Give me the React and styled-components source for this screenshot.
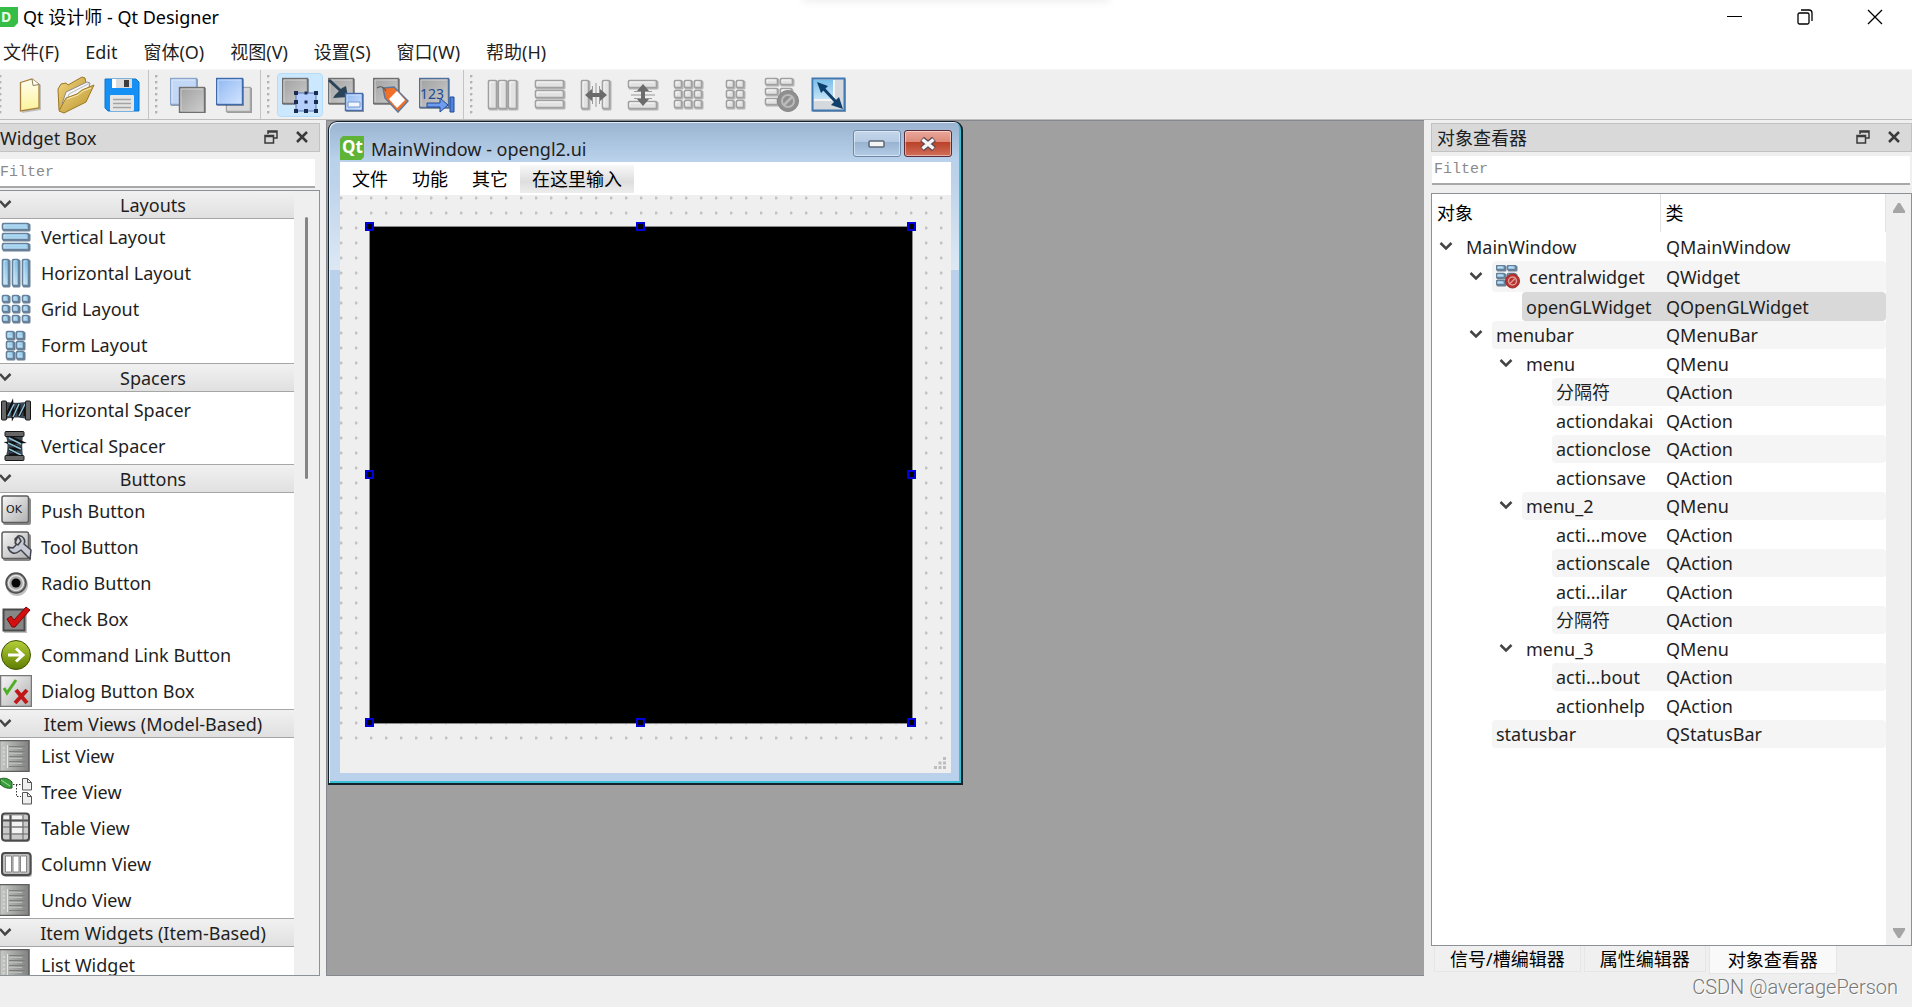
import React from 'react';
import styled, { createGlobalStyle, ThemeProvider } from 'styled-components';

const theme = {
  chrome: '#efefef',
  dockTitle: '#d9d9d9',
  line: '#bdbdbd',
  frame: '#8c9097',
  canvas: '#a0a0a0',
  text: '#1f1f1f',
  stripe: '#f5f5f5',
  selected: '#d9d9d9',
  aero: '#b9d1ea',
};

const GlobalStyle = createGlobalStyle`
  * { box-sizing: border-box; }

  body {
    margin: 0;
    font-family: "Noto Sans", "Noto Sans CJK SC", sans-serif;
    font-size: 18px;
    line-height: 26px;
    color: #1f1f1f;
    background-color: #efefef;
  }

  button, input {
    font: inherit;
    color: inherit;
    border: none;
    padding: 0;
    margin: 0;
    background: none;
  }

  ul { list-style: none; margin: 0; padding: 0; }
  h1, h2, h3 { margin: 0; font: inherit; }
  svg { display: block; flex-shrink: 0; }
`;

const Page = styled.div`
  height: 100vh;
  display: flex;
  flex-direction: column;
  overflow: hidden;
  position: relative;
`;

const TopShadow = styled.div`
  position: absolute;
  top: -4px;
  left: 42%;
  width: 16%;
  height: 4px;
  box-shadow: 0 0 8px rgba(0, 0, 0, .14);
`;

const TitleBar = styled.header`
  height: 34px;
  display: flex;
  align-items: center;
  background-color: #fff;
  color: #000;
  padding-right: 2px;

  h1 { flex: 1; margin-left: 5px; line-height: 26px; }
`;

const WindowButton = styled.button`
  width: 70px;
  height: 33px;
  display: flex;
  align-items: center;
  justify-content: center;
`;

const MenuBar = styled.nav`
  height: 36px;
  display: flex;
  align-items: center;
  gap: 26px;
  padding-left: 3px;
  background-color: #fff;
  border-bottom: 1px solid #f6f6f6;
`;

const ToolBar = styled.div`
  height: 50px;
  display: flex;
  align-items: center;
  border-bottom: 1px solid ${props => props.theme.line};
`;

const Grip = styled.div`
  width: 3px;
  height: 40px;
  margin-right: ${props => props.$first ? '5px' : '7px'};
  margin-left: ${props => props.$first ? '-1px' : '6px'};
  background-image: radial-gradient(circle at 1px 1px, #b4b4b4 1px, transparent 2px);
  background-size: 3px 6px;
`;

const ToolGroup = styled.div`
  width: ${props => props.$width}px;
  display: flex;

  button {
    flex: 1;
    height: 44px;
    display: flex;
    align-items: center;
    justify-content: center;
    border-radius: 4px;
    border: 1px solid transparent;
  }

  button[aria-pressed="true"] {
    background-color: #cce8ff;
    border-color: #b5dcfa;
  }
`;

const Separator = styled.div`
  width: 1px;
  height: 49px;
  margin-left: 3px;
  background-color: #c4c4c4;
`;

const Workspace = styled.main`
  flex: 1;
  min-height: 0;
  display: flex;
`;

const Dock = styled.section`
  width: ${props => props.$width}px;
  flex-shrink: 0;
  display: flex;
  flex-direction: column;
  min-height: 0;
  padding-top: 3px;
`;

const DockTitle = styled.div`
  height: 29px;
  display: flex;
  align-items: center;
  padding-left: ${props => props.$indent}px;
  padding-right: 2px;
  background-color: ${props => props.theme.dockTitle};
  border: 1px solid #c2c2c2;
  border-left-width: ${props => props.$indent ? '1px' : '0'};

  h2 { flex: 1; }

  button {
    width: 31px;
    height: 26px;
    display: flex;
    align-items: center;
    justify-content: center;
    padding-bottom: 2px;
  }
`;

const FilterInput = styled.input.attrs({ type: 'text', placeholder: 'Filter', 'aria-label': 'Filter' })`
  height: 29px;
  flex-shrink: 0;
  margin: ${props => props.$wide ? '4px 2px 8px 1px' : '7px 5px 2px 0'};
  padding-left: ${props => props.$wide ? '2px' : '0'};
  background-color: #fff;
  border-bottom: 2px solid #a8a8a8;
  font-family: "Liberation Mono", monospace;
  font-size: 15px;

  &::placeholder { color: #8a8a8a; opacity: 1; }
`;

const Frame = styled.div`
  flex: 1;
  min-height: 0;
  display: flex;
  overflow: hidden;
  border: 1px solid ${props => props.theme.frame};
  border-left-width: ${props => props.$open ? '0' : '1px'};
`;

const WidgetList = styled.div`
  width: 294px;
  background-color: #fff;
`;

const CategoryHeader = styled.button`
  width: 100%;
  height: ${props => props.$first ? '28px' : '29px'};
  display: flex;
  align-items: center;
  background: linear-gradient(#f1f1f1, #e0e0e0);
  border-top: ${props => props.$first ? 'none' : '1px solid #a6a6a6'};
  border-bottom: 1px solid #a6a6a6;

  span { flex: 1; text-align: center; }
`;

const WidgetItem = styled.li`
  height: 36px;
  display: flex;
  align-items: center;
  gap: 9px;
`;

const ScrollTrack = styled.div`
  width: 25px;
  display: flex;
  flex-direction: column;
  align-items: center;
  justify-content: ${props => props.$arrows ? 'space-between' : 'flex-start'};
  padding: ${props => props.$arrows ? '9px 0 7px' : '26px 0 0'};
  background-color: ${props => props.theme.chrome};
`;

const ScrollThumb = styled.div`
  width: 3px;
  height: 262px;
  border-radius: 2px;
  background-color: #858585;
`;

const Canvas = styled.div`
  flex: 1;
  margin: 0 7px 0 6px;
  padding-left: 1px;
  background-color: ${props => props.theme.canvas};
  border-top: 1px solid #868a90;
  border-left: 1px solid #868a90;
  border-bottom: 1px solid #868a90;
`;

const FormWindow = styled.section`
  width: 635px;
  padding: 0 9px 10px;
  border: 1px solid #16222b;
  border-width: 1px 2px 2px 1px;
  border-radius: 9px 9px 0 0;
  background:
    linear-gradient(#9ab4d1, #b9d1ea 38px, #bdd3eb 60px, #dde8f4 148px) top / 100% 148px no-repeat,
    ${props => props.theme.aero};
  box-shadow: inset 1px 1px 0 #e4eef8, inset -2px -2px 0 #37bfd3;
`;

const FormTitle = styled.div`
  height: 40px;
  display: flex;
  align-items: flex-start;
  padding: 8px 0 0 2px;

  svg { margin-top: 6px; }
  h2 { flex: 1; margin: 6px 0 0 7px; }
`;

const AeroButton = styled.button`
  width: 48px;
  height: 27px;
  margin-left: 3px;
  display: flex;
  align-items: center;
  justify-content: center;
  border: 1px solid ${props => props.$close ? '#5c2b36' : '#6f88a6'};
  border-radius: 3px;
  background: ${props => props.$close
    ? 'linear-gradient(#e8a89b, #dd8877 45%, #bb4128 46%, #d1705a)'
    : 'linear-gradient(#c4d6ea, #b5cbe3 45%, #98b3d0 46%, #b4cce6)'};
  box-shadow: inset 0 0 0 1px rgba(255, 255, 255, .45);

  svg { margin-top: 0; }
`;

const FormClient = styled.div`
  margin: 0 1px 0 2px;
  background-color: ${props => props.theme.chrome};
`;

const FormMenu = styled.div`
  height: 33px;
  display: flex;
  align-items: center;
  background-color: #fff;
  color: #000;

  button { height: 28px; padding: 0 12px; }
  button:last-child { background: linear-gradient(#f8f8f8, #dedede 60%, #ededed); }
`;

const DotGrid = styled.div`
  height: 552px;
  padding: 32px 39px 24px 30px;
  background-image: radial-gradient(circle at 1px 3px, #c2c2c2 1px, transparent 2px);
  background-size: 15px 15px;
`;

const GLWidget = styled.div`
  height: 496px;
  position: relative;
  background-color: #000;
  outline: 1px solid #8a8a8a;
`;

const Handle = styled.i`
  position: absolute;
  left: ${props => props.$x};
  top: ${props => props.$y};
  width: 9px;
  height: 9px;
  margin: -5px 0 0 -5px;
  background-color: #000;
  border: 2px solid #0000d8;
`;

const FormStatus = styled.div`
  height: 26px;
  display: flex;
  justify-content: flex-end;
  align-items: flex-end;
  padding: 0 4px 3px 0;
`;

const ObjectPane = styled.div`
  flex: 1;
  background-color: #fff;
`;

const ObjectTable = styled.table`
  width: 100%;
  table-layout: fixed;
  border-collapse: collapse;

  th, td {
    padding: 0;
    text-align: left;
    font-weight: normal;
    white-space: nowrap;
    vertical-align: middle;
  }

  th {
    height: 38px;
    padding-left: 5px;
    border-right: 1px solid #e2e2e2;
    color: #000;
  }

  th:first-child { width: 228px; }
`;

const ObjectRow = styled.tr`
  height: ${props => props.$tall ? '31px' : props.$striped ? '28px' : '29px'};

  td:last-child {
    padding-left: 6px;
    border-radius: 0 4px 4px 0;
    background-color: ${props => rowColor(props)};
  }
`;

const ObjectCell = styled.div`
  height: ${props => props.$tall ? '31px' : props.$striped ? '28px' : '29px'};
  display: flex;
  align-items: center;
  padding-left: ${props => props.$level * 30}px;

  > svg, > i { width: 30px; flex-shrink: 0; }

  span {
    flex: 1;
    height: 100%;
    display: flex;
    align-items: center;
    gap: 9px;
    padding-left: 4px;
    border-radius: 4px 0 0 4px;
    background-color: ${props => rowColor(props)};
  }
`;

const Tabs = styled.div`
  height: 30px;
  display: flex;
  align-items: flex-start;
  gap: 3px;
  padding-left: 3px;
`;

const Tab = styled.button`
  height: ${props => props.$active ? '28px' : '26px'};
  padding: 0 ${props => props.$active ? '18px' : '15px'};
  line-height: ${props => props.$active ? '26px' : '24px'};
  color: #000;
  background-color: ${props => props.$active ? '#f9f9f9' : '#f0f0f0'};
  border: 1px solid #e6e6e6;
  border-top: none;
`;

const StatusBar = styled.footer`
  height: 31px;
  display: flex;
  justify-content: flex-end;
  padding-right: 14px;
  font-family: Roboto, "Liberation Sans", sans-serif;
  font-weight: 300;
  font-size: 20px;
  line-height: 22px;
  color: #777;
  text-shadow: 1px 1px 0 #fff;
`;

function rowColor({ theme, $selected, $striped }) {
  if ($selected) return theme.selected;
  return $striped ? theme.stripe : '#fff';
}

// Gradients shared by every icon
const Defs = () => (
  <svg width="0" height="0" style={{ position: 'absolute' }} aria-hidden="true">
    <defs>
      <linearGradient id="gray" x1="0" y1="0" x2="1" y2="1">
        <stop offset="0" stopColor="#a0a0a0" /><stop offset="1" stopColor="#cecece" />
      </linearGradient>
      <linearGradient id="silver" x1="0" y1="0" x2="1" y2="1">
        <stop offset="0" stopColor="#f6f6f6" /><stop offset="1" stopColor="#b0b0b0" />
      </linearGradient>
      <linearGradient id="steel" x1="0" y1="0" x2="1" y2="0">
        <stop offset="0" stopColor="#c9cbc8" /><stop offset="1" stopColor="#7f827e" />
      </linearGradient>
      <linearGradient id="blue" x1="0" y1="0" x2="1" y2="1">
        <stop offset="0" stopColor="#8fb8f2" /><stop offset="1" stopColor="#d4e5ff" />
      </linearGradient>
      <linearGradient id="sky" x1="0" y1="0" x2="0" y2="1">
        <stop offset="0" stopColor="#7cc0ea" /><stop offset="1" stopColor="#c4e3f5" />
      </linearGradient>
      <linearGradient id="paper" x1="0" y1="0" x2="0" y2="1">
        <stop offset="0" stopColor="#fffef0" /><stop offset="1" stopColor="#fbf39a" />
      </linearGradient>
      <linearGradient id="gold" x1="0" y1="0" x2="1" y2="1">
        <stop offset="0" stopColor="#f4d987" /><stop offset="1" stopColor="#b78f24" />
      </linearGradient>
      <linearGradient id="lime" x1="0" y1="0" x2="0" y2="1">
        <stop offset="0" stopColor="#b4cf3a" /><stop offset="1" stopColor="#5f7d00" />
      </linearGradient>
    </defs>
  </svg>
);

const Svg = ({ size = 36, children }) => (
  <svg width={size} height={size} viewBox={`0 0 ${size} ${size}`} fill="none" aria-hidden="true">{children}</svg>
);

// Bevelled blocks used by all layout icons
function Blocks({ boxes, blue }) {
  return boxes.map(([x, y, w, h], i) => (
    <g key={i}>
      <rect x={x + 0.5} y={y + 0.5} width={w + 1} height={h + 1} rx="1.5" fill={blue ? '#6d8096' : '#b4b4b4'} />
      <rect x={x + 0.5} y={y + 0.5} width={w - 1} height={h - 1} rx="1"
        fill={blue ? 'url(#sky)' : '#e2e2e2'} stroke={blue ? '#64809a' : '#a0a0a0'} strokeWidth="1.6" />
      <path d={`M${x + 2} ${y + h - 2.5}V${y + 2}H${x + w - 2.5}`} stroke="#fff" strokeOpacity={blue ? '.5' : '.8'} />
    </g>
  ));
}

const grid = (cols, rows, x, y, size, step) => {
  const boxes = [];
  for (let r = 0; r < rows; r++)
    for (let c = 0; c < cols; c++) boxes.push([x + c * step, y + r * step, size, size]);
  return boxes;
};

const Square = ({ x, y, size, fill, stroke }) => (
  <>
    <rect x={x + 1} y={y + 1} width={size} height={size} fill="#000" opacity=".35" />
    <rect x={x + 0.5} y={y + 0.5} width={size - 1} height={size - 1} fill={fill} stroke={stroke} strokeWidth="1.4" />
    <path d={`M${x + 2} ${y + size - 2}V${y + 2}H${x + size - 2}`} stroke="#fff" strokeOpacity=".45" />
  </>
);

const NewIcon = () => (
  <Svg>
    <path d="M10 6 22 3l7 5v25l-19 3Z" fill="#000" opacity=".2" />
    <path d="M8.500 5.500 20 2l7 5.500V31L8.500 34Z" fill="url(#paper)" stroke="#a8813f" strokeWidth="1.300" />
    <path d="m20 2 1 6.500 6-1" fill="#fff" stroke="#8d8059" />
  </Svg>
);

const OpenIcon = () => (
  <svg width="40" height="38" viewBox="0 0 40 38" fill="none" aria-hidden="true">
    <path d="M2 13 5 8l5-1 2 2 14-8 3 1 1 5L6 33l-3 1Z" fill="url(#gold)" stroke="#9b7723" />
    <path d="M6 28 10 16 31 6l3 1-2 8L8 31Z" fill="#f6f6f6" stroke="#8d8d8d" />
    <path d="m9 29 4-11L34 7" stroke="#bbb" />
    <path d="m3 35 7-13 11-4 5-4 12-5-8 17L8 37Z" fill="url(#gold)" stroke="#9b7723" />
    <path d="m11 23 11-4 5-4 8-3" stroke="#fbebb2" />
  </svg>
);

const SaveIcon = () => (
  <Svg>
    <path d="M1 2h31l3 3v29H4l-3-3Z" fill="#1690f5" stroke="#0d74cc" />
    <path d="M8 2h20v9H8Z" fill="#dcdcdc" /><path d="M20 3h5v7h-5Z" fill="#3d3d3d" />
    <path d="M8 2h4v9H8Z" fill="#fff" />
    <rect x="6" y="18" width="24" height="16" rx="1" fill="#e5e5e5" />
    <path d="M9 22.500h18M9 26.500h18M9 30.500h18" stroke="#a3a3a3" strokeWidth="1.500" />
  </Svg>
);

const SendBackIcon = () => (
  <Svg>
    <Square x={0} y={1} size={27} fill="#c3d7f6" stroke="#8ba6cb" />
    <Square x={9} y={10} size={26} fill="url(#gray)" stroke="#707070" />
  </Svg>
);

const BringFrontIcon = () => (
  <Svg>
    <Square x={10} y={10} size={25} fill="#d8d8d8" stroke="#a5a5a5" />
    <Square x={0} y={1} size={27} fill="url(#blue)" stroke="#3e69ad" />
  </Svg>
);

const EditWidgetsIcon = () => (
  <Svg>
    <Square x={0} y={1} size={26} fill="url(#gray)" stroke="#707070" />
    <rect x="14" y="16" width="20" height="18" fill="#b4cffb" stroke="#5577ae" />
    {[[14, 16], [34, 16], [14, 25], [34, 25], [14, 34], [24, 34], [34, 34]].map(([x, y]) => (
      <rect key={`${x}-${y}`} x={x - 2} y={y - 2} width="4" height="4" fill="#1b2b52" />
    ))}
    <rect x="22.500" y="23.500" width="3" height="3" fill="#1b2b52" />
    <rect x="22.500" y="14.500" width="3" height="3" fill="#1b2b52" />
  </Svg>
);

const EditSignalsIcon = () => (
  <Svg>
    <Square x={0} y={1} size={26} fill="url(#gray)" stroke="#707070" />
    <path d="m1 3 13 12" stroke="#2a4358" strokeWidth="3" />
    <path d="m20 20-2-11-4 2-7 7-2 3Z" fill="#2a4358" />
    <Square x={17} y={16} size={18} fill="url(#blue)" stroke="#456bab" />
    <path d="M20 25h12v5H20Z" fill="#f2f7ff" stroke="#7296ce" />
  </Svg>
);

const EditBuddiesIcon = () => (
  <Svg>
    <Square x={0} y={1} size={26} fill="url(#gray)" stroke="#707070" />
    <path d="m10 11 11-1 14 14-10 11-13-14Z" fill="#f0702a" stroke="#5f7898" strokeWidth="1.500" />
    <path d="m16 22 8-8 8 9-8 8Z" fill="#fff" />
    <path d="M13 14C10 9 7 9 4 11" stroke="#444" />
  </Svg>
);

const TabOrderIcon = () => (
  <Svg>
    <Square x={0} y={1} size={30} fill="url(#gray)" stroke="#4f6f9f" />
    <text x="1" y="22" fontSize="14" fontFamily="Noto Sans, sans-serif" fill="#234a93">123</text>
    <path d="M8 26h13v-5l8 7-8 7v-5H8Z" fill="#6e9df0" stroke="#234a93" />
    <path d="M31 20h4v15h-4Z" fill="#4f82e0" stroke="#234a93" />
  </Svg>
);

const HBars = [[3, 3, 9, 29], [13, 3, 9, 29], [23, 3, 9, 29]];
const VBars = [[3, 3, 29, 8], [3, 13, 29, 8], [3, 23, 29, 8]];

const SplitHIcon = () => (
  <Svg>
    <Blocks boxes={[[3, 3, 8, 29], [24, 3, 8, 29]]} />
    <path d="M14.500 9v18M18 6v24M21.500 9v18" stroke="#999" />
    <path d="m7 18 7-6v4h8v-4l7 6-7 6v-4h-8v4Z" fill="#6b6b6b" />
  </Svg>
);

const SplitVIcon = () => (
  <Svg>
    <Blocks boxes={[[3, 3, 29, 8], [3, 24, 29, 8]]} />
    <path d="M9 14.500h18M6 18h24M9 21.500h18" stroke="#999" />
    <path d="m18 7 6 7h-4v8h4l-6 7-6-7h4v-8h-4Z" fill="#6b6b6b" />
  </Svg>
);

const BreakIcon = () => (
  <Svg>
    <Blocks boxes={[[1, 1, 13, 7], [16, 1, 13, 7], [1, 11, 13, 7], [16, 11, 12, 7], [1, 21, 13, 7]]} />
    <circle cx="24" cy="24" r="10.500" fill="#8f8f8f" stroke="#858585" />
    <circle cx="24" cy="24" r="6" fill="#8f8f8f" stroke="#bababa" strokeWidth="2" />
    <path d="m19.500 28.500 9-9" stroke="#bababa" strokeWidth="2.500" />
  </Svg>
);

const AdjustIcon = () => (
  <Svg>
    <rect x="2" y="2" width="33" height="33" fill="#000" opacity=".3" />
    <rect x="1.500" y="1.500" width="32" height="32" fill="#d5d9de" stroke="#3f79b4" strokeWidth="2" />
    <path d="M3 3h19v19H3Z" fill="url(#sky)" /><path d="M3 23h20V3" stroke="#f4f4f4" strokeWidth="2" />
    <path d="m10 9 16 17" stroke="#0f3f6c" strokeWidth="3" />
    <path d="m6 5 11 4-7 7ZM32 32l-12-4 8-8Z" fill="#0f3f6c" />
  </Svg>
);

const toolGroups = [
  { width: 138, tools: [['New', <NewIcon />], ['Open', <OpenIcon />], ['Save', <SaveIcon />]] },
  { width: 92, tools: [['Send to Back', <SendBackIcon />], ['Bring to Front', <BringFrontIcon />]] },
  { width: 183, tools: [
    ['Edit Widgets', <EditWidgetsIcon />, true],
    ['Edit Signals/Slots', <EditSignalsIcon />],
    ['Edit Buddies', <EditBuddiesIcon />],
    ['Edit Tab Order', <TabOrderIcon />],
  ] },
  { width: 372, tools: [
    ['Lay Out Horizontally', <Svg><Blocks boxes={HBars} /></Svg>],
    ['Lay Out Vertically', <Svg><Blocks boxes={VBars} /></Svg>],
    ['Horizontal Splitter', <SplitHIcon />],
    ['Vertical Splitter', <SplitVIcon />],
    ['Lay Out in a Grid', <Svg><Blocks boxes={grid(3, 3, 3, 3, 8, 10)} /></Svg>],
    ['Lay Out in a Form', <Svg><Blocks boxes={grid(2, 3, 8, 3, 8, 10)} /></Svg>],
    ['Break Layout', <BreakIcon />],
    ['Adjust Size', <AdjustIcon />],
  ] },
];

const SpringIcon = ({ vertical }) => (
  <Svg size={32}>
    <g transform={vertical ? 'rotate(90 16 16) translate(0 2)' : 'translate(0 1)'}>
      <path d="M6 7c5 1 14 1 20 0v17c-6-2-14-2-20 0Z" fill="#3b4852" />
      <path d="m7 20 5-11 1 12 6-12v12l6-11v11" stroke="#111" strokeWidth="3" />
      <path d="m8 21 6-12M13 22l6-13M19 21l6-12" stroke="#8fc3dc" strokeWidth="1.500" />
      <rect x="1.500" y="6" width="5" height="19" rx="1" fill="#666" stroke="#161616" />
      <rect x="25.500" y="6" width="5" height="19" rx="1" fill="#666" stroke="#161616" />
    </g>
  </Svg>
);

const RoundedBox = () => (
  <>
    <rect x="3" y="3" width="28" height="27" rx="2" fill="#000" opacity=".45" />
    <rect x="2" y="1" width="26.500" height="26.500" rx="2" fill="url(#silver)" stroke="#5e5e5e" strokeWidth="1.500" />
  </>
);

const PushIcon = () => (
  <Svg size={32}>
    <RoundedBox />
    <text x="6" y="18" fontSize="11" fontWeight="500" fontFamily="DejaVu Sans, sans-serif" fill="#222">OK</text>
  </Svg>
);

const ToolIcon = () => (
  <Svg size={32}>
    <RoundedBox />
    <path d="M18 5 15 8l1 6-3 3-5-1c1 5 6 8 10 5l3-2 9 9 1-9-7-6c2-4-1-9-6-8l3 5-3 4-3-2Z"
      fill="#c6c9d6" stroke="#43434c" strokeWidth="1.500" strokeLinejoin="round" />
  </Svg>
);

const RadioIcon = () => (
  <Svg size={32}>
    <circle cx="17" cy="18" r="11" fill="#000" opacity=".25" />
    <circle cx="16" cy="16" r="10" fill="#8d8d8d" stroke="#4c4c4c" strokeWidth="1.500" />
    <circle cx="16" cy="16" r="7.500" fill="#a8a8a8" stroke="#e3e3e3" strokeWidth="1.500" />
    <circle cx="16" cy="16" r="4.500" fill="#080808" />
  </Svg>
);

const CheckIcon = () => (
  <Svg size={32}>
    <rect x="4" y="7" width="23" height="23" fill="#000" opacity=".25" />
    <rect x="3.500" y="6.500" width="21" height="21" fill="#878787" stroke="#4a4a4a" strokeWidth="2" />
    <path d="m7 16 4-3 3 4L26 4l4 3-15 17h-3Z" fill="#d40f0f" stroke="#7a0a0a" />
  </Svg>
);

const LinkIcon = () => (
  <Svg size={32}>
    <circle cx="16" cy="16" r="14.500" fill="url(#lime)" stroke="#3f5405" />
    <path d="M8 16h14M16 9.500l7 6.500-7 6.500" stroke="#fff" strokeWidth="3" />
  </Svg>
);

const DialogIcon = () => (
  <Svg size={32}>
    <rect x=".500" y=".500" width="31" height="31" fill="url(#silver)" stroke="#777" strokeWidth="1.500" />
    <path d="m4 13 3 5 9-13" stroke="#4fae26" strokeWidth="3" />
    <path d="m16 15 11 13M27 15 15 28" stroke="#c01818" strokeWidth="4" />
  </Svg>
);

const ListIcon = () => (
  <Svg size={32}>
    <rect x="-.500" y=".500" width="29.500" height="31" fill="url(#steel)" stroke="#5e5e5e" strokeWidth="1.500" />
    <path d="M7.500 5v23M3 8h2M3 12h2M3 16h2M3 20h2M3 24h2" stroke="#e6e6e6" />
    <path d="M9 6.500h16M9 11.500h16M9 16.500h16M9 21.500h16M9 26.500h16" stroke="#7c7e7b" />
    <path d="M9 8.500h13M9 13.500h13M9 18.500h13M9 23.500h13" stroke="#bbbeba" />
  </Svg>
);

const TreeIcon = () => (
  <Svg size={32}>
    <path d="M0 3c5-2 9 0 12 3v6c-5 1-9-1-12-4Z" fill="#3a9d3c" stroke="#1d5a20" />
    <path d="m1 4 9 6" stroke="#a7dfa0" />
    <path d="M13 8.500h8M16.500 9v12M17 20.500h4" stroke="#333" strokeDasharray="1.500 1.500" />
    <path d="M22.500 2.500h5l4 4V14h-9ZM22.500 16.500h5l4 4V28h-9Z" fill="#eee" stroke="#555" />
    <path d="M27.500 2.500v4h4M27.500 16.500v4h4" stroke="#555" />
  </Svg>
);

const TableIcon = () => (
  <Svg size={32}>
    <rect x="3" y="3" width="27" height="27" rx="3" fill="#000" opacity=".35" />
    <rect x="2" y="1.500" width="27" height="27" rx="3" fill="#c9c9c9" stroke="#4a4a4a" strokeWidth="2" />
    <path d="M12 10h10v4H12ZM12 16h10v5H12ZM4 4h5v3H4ZM12 4h10v3H12Z" fill="#f3f3f3" />
    <path d="M3 8.500h25M10.500 3v25" stroke="#555" strokeWidth="2" />
    <path d="M3 15h25M3 22h25M23 3v25" stroke="#666" />
  </Svg>
);

const ColumnIcon = () => (
  <Svg size={32}>
    <rect x="3" y="6" width="29" height="23" rx="3" fill="#000" opacity=".3" />
    <rect x="2" y="5" width="28.500" height="22" rx="3" fill="#bdbdbd" stroke="#4c4c4c" strokeWidth="2" />
    <path d="M5.500 8h6v16h-6ZM13 8h6v16h-6ZM20.500 8h6v16h-6Z" fill="#fff" stroke="#888" />
  </Svg>
);

const small = boxes => <Svg size={32}><Blocks blue boxes={boxes} /></Svg>;

const categories = [
  { title: 'Layouts', items: [
    ['Vertical Layout', small([[2, 2, 27, 7], [2, 12, 27, 7], [2, 22, 27, 7]])],
    ['Horizontal Layout', small([[2, 2, 7, 27], [12, 2, 7, 27], [22, 2, 7, 27]])],
    ['Grid Layout', small(grid(3, 3, 2, 2, 7, 10))],
    ['Form Layout', small(grid(2, 3, 6, 2, 8, 10))],
  ] },
  { title: 'Spacers', items: [
    ['Horizontal Spacer', <SpringIcon />],
    ['Vertical Spacer', <SpringIcon vertical />],
  ] },
  { title: 'Buttons', items: [
    ['Push Button', <PushIcon />],
    ['Tool Button', <ToolIcon />],
    ['Radio Button', <RadioIcon />],
    ['Check Box', <CheckIcon />],
    ['Command Link Button', <LinkIcon />],
    ['Dialog Button Box', <DialogIcon />],
  ] },
  { title: 'Item Views (Model-Based)', items: [
    ['List View', <ListIcon />],
    ['Tree View', <TreeIcon />],
    ['Table View', <TableIcon />],
    ['Column View', <ColumnIcon />],
    ['Undo View', <ListIcon />],
  ] },
  { title: 'Item Widgets (Item-Based)', items: [
    ['List Widget', <ListIcon />],
  ] },
];

// name, class, level, expandable
const objects = [
  ['MainWindow', 'QMainWindow', 0, true],
  ['centralwidget', 'QWidget', 1, true],
  ['openGLWidget', 'QOpenGLWidget', 2],
  ['menubar', 'QMenuBar', 1, true],
  ['menu', 'QMenu', 2, true],
  ['分隔符', 'QAction', 3],
  ['actiondakai', 'QAction', 3],
  ['actionclose', 'QAction', 3],
  ['actionsave', 'QAction', 3],
  ['menu_2', 'QMenu', 2, true],
  ['acti...move', 'QAction', 3],
  ['actionscale', 'QAction', 3],
  ['acti...ilar', 'QAction', 3],
  ['分隔符', 'QAction', 3],
  ['menu_3', 'QMenu', 2, true],
  ['acti...bout', 'QAction', 3],
  ['actionhelp', 'QAction', 3],
  ['statusbar', 'QStatusBar', 1],
];

const Chevron = () => (
  <svg width="12" height="26" viewBox="0 0 12 26" fill="none" aria-hidden="true">
    <path d="m0 9 5 5.500L10.500 9" stroke="#444" strokeWidth="2.500" />
  </svg>
);

const TreeChevron = () => (
  <svg width="30" height="28" viewBox="0 0 30 28" fill="none" aria-hidden="true">
    <path d="m8.500 10 5.500 5.500 5.500-5.500" stroke="#444" strokeWidth="2.500" />
  </svg>
);

const CentralWidgetIcon = () => (
  <svg width="24" height="24" viewBox="0 0 24 24" fill="none" aria-hidden="true">
    <Blocks blue boxes={[[0, 0, 9, 5], [11, 0, 9, 5], [0, 8, 9, 5], [11, 8, 9, 5], [0, 15, 9, 5]]} />
    <circle cx="16.500" cy="16" r="7" fill="#b9302e" stroke="#9c3330" />
    <circle cx="16.500" cy="16" r="4" stroke="#dc9a94" strokeWidth="1.500" />
    <path d="m13.500 19 6-6" stroke="#dc9a94" strokeWidth="1.500" />
  </svg>
);

function DockButtons() {
  return (
    <>
      <button aria-label="Float">
        <svg width="14" height="14" viewBox="0 0 14 14" fill="none" stroke="#3a3a3a" strokeWidth="1.500">
          <path d="M4 4V1h9v7h-3M1 5.500h8.500V13H1ZM1 6.500h8.500M4 2h9" />
        </svg>
      </button>
      <button aria-label="Close">
        <svg width="12" height="12" viewBox="0 0 12 12" stroke="#3a3a3a" strokeWidth="2.500">
          <path d="m1 1 10 10M11 1 1 11" />
        </svg>
      </button>
    </>
  );
}

function WidgetBox() {
  return (
    <Dock $width={320}>
      <DockTitle $indent={0}>
        <h2>Widget Box</h2>
        <DockButtons />
      </DockTitle>
      <FilterInput />
      <Frame $open>
        <WidgetList>
          {categories.map((category, i) => (
            <React.Fragment key={category.title}>
              <CategoryHeader $first={i === 0}>
                <Chevron />
                <span>{category.title}</span>
              </CategoryHeader>
              <ul>
                {category.items.map(([name, icon]) => (
                  <WidgetItem key={name}>{icon}{name}</WidgetItem>
                ))}
              </ul>
            </React.Fragment>
          ))}
        </WidgetList>
        <ScrollTrack><ScrollThumb /></ScrollTrack>
      </Frame>
    </Dock>
  );
}

function FormEditor() {
  const handles = [
    ['0%', '0%'], ['50%', '0%'], ['100%', '0%'],
    ['0%', '50%'], ['100%', '50%'],
    ['0%', '100%'], ['50%', '100%'], ['100%', '100%'],
  ];
  return (
    <FormWindow>
      <FormTitle>
        <svg width="24" height="24" viewBox="0 0 24 24">
          <path d="M3 0h21v21l-3 3H0V3Z" fill="#5fb336" />
          <text x="2" y="17" fontSize="17" fontWeight="700" fontFamily="Noto Sans, sans-serif" fill="#fff">Qt</text>
        </svg>
        <h2>MainWindow - opengl2.ui</h2>
        <AeroButton aria-label="Minimize">
          <svg width="18" height="8" viewBox="0 0 18 8">
            <rect x="1" y="1" width="15" height="6" rx="1" fill="#f4f4f4" stroke="#5b6675" strokeWidth="1.500" />
          </svg>
        </AeroButton>
        <AeroButton $close aria-label="Close">
          <svg width="18" height="14" viewBox="0 0 18 14">
            <path d="m3 2 12 10M15 2 3 12" stroke="#5d4a55" strokeWidth="6" />
            <path d="m3.500 2.500 11 9M14.500 2.500l-11 9" stroke="#f6f6f6" strokeWidth="3.500" />
          </svg>
        </AeroButton>
      </FormTitle>
      <FormClient>
        <FormMenu>
          {['文件', '功能', '其它', '在这里输入'].map(label => <button key={label}>{label}</button>)}
        </FormMenu>
        <DotGrid>
          <GLWidget>
            {handles.map(([x, y]) => <Handle key={x + y} $x={x} $y={y} />)}
          </GLWidget>
        </DotGrid>
        <FormStatus>
          <svg width="14" height="14" viewBox="0 0 14 14" fill="#bdbdbd">
            <path d="M10 1h3v3h-3ZM5.500 5.500h3v3h-3ZM10 5.500h3v3h-3ZM1 10h3v3H1ZM5.500 10h3v3h-3ZM10 10h3v3h-3Z" />
          </svg>
        </FormStatus>
      </FormClient>
    </FormWindow>
  );
}

function ObjectInspector() {
  const [selected, setSelected] = React.useState(2);
  return (
    <Dock $width={481}>
      <DockTitle $indent={5}>
        <h2>对象查看器</h2>
        <DockButtons />
      </DockTitle>
      <FilterInput $wide />
      <Frame>
        <ObjectPane>
          <ObjectTable>
            <thead>
              <tr><th>对象</th><th>类</th></tr>
            </thead>
            <tbody>
              {objects.map(([name, type, level, open], i) => {
                const look = { $striped: i % 2 === 1, $tall: i === 1, $selected: i === selected };
                return (
                  <ObjectRow key={i} {...look} onClick={() => setSelected(i)}>
                    <td>
                      <ObjectCell {...look} $level={level}>
                        {open ? <TreeChevron /> : <i />}
                        <span>{i === 1 && <CentralWidgetIcon />}{name}</span>
                      </ObjectCell>
                    </td>
                    <td>{type}</td>
                  </ObjectRow>
                );
              })}
            </tbody>
          </ObjectTable>
        </ObjectPane>
        <ScrollTrack $arrows>
          <svg width="12" height="10" viewBox="0 0 12 10" fill="#a5a5a5"><path d="M5 0h2l5 8v2H0V8Z" /></svg>
          <svg width="12" height="10" viewBox="0 0 12 10" fill="#a5a5a5"><path d="M5 10h2l5-8V0H0v2Z" /></svg>
        </ScrollTrack>
      </Frame>
      <Tabs>
        <Tab>信号/槽编辑器</Tab>
        <Tab>属性编辑器</Tab>
        <Tab $active>对象查看器</Tab>
      </Tabs>
    </Dock>
  );
}

export default function App() {
  return (
    <ThemeProvider theme={theme}>
      <GlobalStyle />
      <Defs />
      <Page>
        <TitleBar>
          <svg width="18" height="20" viewBox="0 0 18 20">
            <path d="M0 0h18v16l-4 4H0Z" fill="#35bd48" />
            <text x="1" y="15" fontSize="14" fontWeight="700" fontFamily="Noto Sans, sans-serif" fill="#e6ffe9">D</text>
          </svg>
          <h1>Qt 设计师 - Qt Designer</h1>
          <WindowButton aria-label="Minimize">
            <svg width="16" height="16" viewBox="0 0 16 16" stroke="#000"><path d="M0 7.500h15" /></svg>
          </WindowButton>
          <WindowButton aria-label="Restore">
            <svg width="16" height="16" viewBox="0 0 16 16" fill="none" stroke="#000" strokeWidth="1.300">
              <rect x="1" y="4" width="11" height="11" rx="1.500" />
              <path d="M4 1h8q3 0 3 3v8" />
            </svg>
          </WindowButton>
          <WindowButton aria-label="Close">
            <svg width="16" height="16" viewBox="0 0 16 16" stroke="#000" strokeWidth="1.300">
              <path d="m1 1 14 14M15 1 1 15" />
            </svg>
          </WindowButton>
        </TitleBar>
        <TopShadow />

        <MenuBar>
          {['文件(F)', 'Edit', '窗体(O)', '视图(V)', '设置(S)', '窗口(W)', '帮助(H)'].map(label => (
            <button key={label}>{label}</button>
          ))}
        </MenuBar>

        <ToolBar>
          {toolGroups.map((group, i) => (
            <React.Fragment key={group.width}>
              {i > 0 && <Separator />}
              <Grip $first={i === 0} />
              <ToolGroup $width={group.width}>
                {group.tools.map(([label, icon, pressed]) => (
                  <button key={label} aria-label={label} aria-pressed={!!pressed}>{icon}</button>
                ))}
              </ToolGroup>
            </React.Fragment>
          ))}
        </ToolBar>

        <Workspace>
          <WidgetBox />
          <Canvas><FormEditor /></Canvas>
          <ObjectInspector />
        </Workspace>

        <StatusBar>CSDN @averagePerson</StatusBar>
      </Page>
    </ThemeProvider>
  );
}
